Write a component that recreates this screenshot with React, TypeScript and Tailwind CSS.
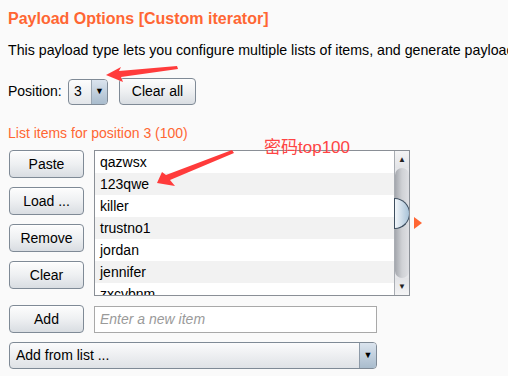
import React from "react";

const btn =
  "w-[75px] h-[28px] rounded-[4px] border border-[#7f8a96] bg-gradient-to-b from-[#fdfdfd] via-[#eef0f2] to-[#d9dde2] text-[14px] text-black flex items-center justify-center shadow-[inset_0_1px_0_#ffffff]";

const items = ["qazwsx", "123qwe", "killer", "trustno1", "jordan", "jennifer", "zxcvbnm"];

export default function App() {
  return (
    <div
      className="relative w-[508px] h-[376px] overflow-hidden bg-[#fafafa] text-black"
      style={{ fontFamily: '"Liberation Sans", Arial, sans-serif' }}
    >
      <div className="pl-[8px] pt-[9px]">
        <div className="h-[20px] leading-[20px] text-[16px] font-bold text-[#ff6633] whitespace-nowrap">
          Payload Options [Custom iterator]
        </div>
        <div className="mt-[12px] h-[18px] leading-[18px] text-[14.2px] whitespace-nowrap">
          This payload type lets you configure multiple lists of items, and generate payloads based on all permutations
        </div>
        <div className="mt-[19px] flex items-center h-[27px]">
          <span className="text-[14px] w-[60px]">Position:</span>
          <div className="w-[40px] h-[26px] rounded-[4px] border border-[#7f8a96] flex overflow-hidden bg-gradient-to-b from-[#fdfdfd] to-[#e3e6ea]">
            <div className="flex-1 flex items-center pl-[5px] text-[14px]">3</div>
            <div className="w-[16px] border-l border-[#9aa6b2] bg-gradient-to-b from-[#dbe4ee] to-[#a9bccd] flex items-center justify-center">
              <span className="text-[9px] leading-none">▼</span>
            </div>
          </div>
          <div className="ml-[11px] w-[77px] h-[27px] rounded-[4px] border border-[#7f8a96] bg-gradient-to-b from-[#fdfdfd] via-[#eef0f2] to-[#d9dde2] text-[14px] flex items-center justify-center">
            Clear all
          </div>
        </div>
        <div className="mt-[19px] h-[18px] leading-[18px] text-[14px] text-[#ff6633] whitespace-nowrap">
          List items for position 3 (100)
        </div>
        <div className="mt-[8px] flex">
          <div className="flex flex-col gap-[9px] pl-[1px]">
            <div className={btn}>Paste</div>
            <div className={btn}>Load ...</div>
            <div className={btn}>Remove</div>
            <div className={btn}>Clear</div>
          </div>
          <div className="ml-[10px] w-[316px] h-[146px] border border-[#8a8f96] bg-white flex overflow-hidden">
            <div className="flex-1 flex flex-col">
              {items.map((t, i) => (
                <div
                  key={t}
                  className={`h-[22px] shrink-0 leading-[22px] pl-[5px] text-[14px] ${i % 2 === 1 ? "bg-[#f2f2f2]" : "bg-white"}`}
                >
                  {t}
                </div>
              ))}
            </div>
            <div className="w-[15px] flex flex-col bg-[#e6e7ea] border-l border-[#a9adb3]">
              <div className="h-[17px] shrink-0 bg-gradient-to-b from-[#f4f4f5] to-[#e3e4e7] flex items-center justify-center">
                <span className="text-[8px] leading-none text-[#222]">▲</span>
              </div>
              <div className="relative flex-1 rounded-t-[9px] rounded-b-[9px] bg-gradient-to-r from-[#a4a7ad] via-[#cfd1d5] to-[#dfe0e4]">
                <div className="absolute left-[-1px] top-[30px] w-[16px] h-[31px] rounded-r-full border border-[#3e4f60] bg-gradient-to-r from-[#f2f6fa] to-[#a9c3d8]" />
              </div>
              <div className="h-[17px] shrink-0 bg-gradient-to-b from-[#e3e4e7] to-[#f4f4f5] flex items-center justify-center">
                <span className="text-[8px] leading-none text-[#222]">▼</span>
              </div>
            </div>
          </div>
          <div className="ml-[4px] mt-[67px] w-0 h-0 border-t-[6px] border-b-[6px] border-l-[8px] border-t-transparent border-b-transparent border-l-[#ff6633]" />
        </div>
        <div className="mt-[9px] flex items-center">
          <div className="pl-[1px]">
            <div className={btn}>Add</div>
          </div>
          <div className="ml-[10px] w-[283px] h-[27px] border border-[#a9a9a9] bg-white flex items-center pl-[5px] text-[14px] italic text-[#9a9a9a]">
            Enter a new item
          </div>
        </div>
        <div className="mt-[9px] ml-[1px] w-[368px] h-[27px] rounded-[4px] border border-[#7f8a96] flex overflow-hidden bg-gradient-to-b from-[#fbfbfc] to-[#dfe2e6]">
          <div className="flex-1 flex items-center pl-[6px] text-[14px]">Add from list ...</div>
          <div className="w-[17px] border-l border-[#8d9aa8] bg-gradient-to-b from-[#dbe4ee] to-[#a9bccd] flex items-center justify-center">
            <span className="text-[9px] leading-none">▼</span>
          </div>
        </div>
      </div>

      <div
        className="absolute left-[264px] top-[138px] text-[17px] leading-[20px] text-[#ff4444] whitespace-nowrap"
        style={{ fontFamily: '"Liberation Sans", "Noto Sans CJK SC", sans-serif' }}
      >
        密码top100
      </div>

      <svg className="absolute left-0 top-0" width="508" height="376">
        <polygon points="106,75 121,67 119,71 177,66 178,69 121,77 123,82" fill="#ff3b3b" />
        <polygon points="157,183 162,172 166,175 232,150 234,153 170,180 175,186" fill="#ff3b3b" />
      </svg>
    </div>
  );
}
